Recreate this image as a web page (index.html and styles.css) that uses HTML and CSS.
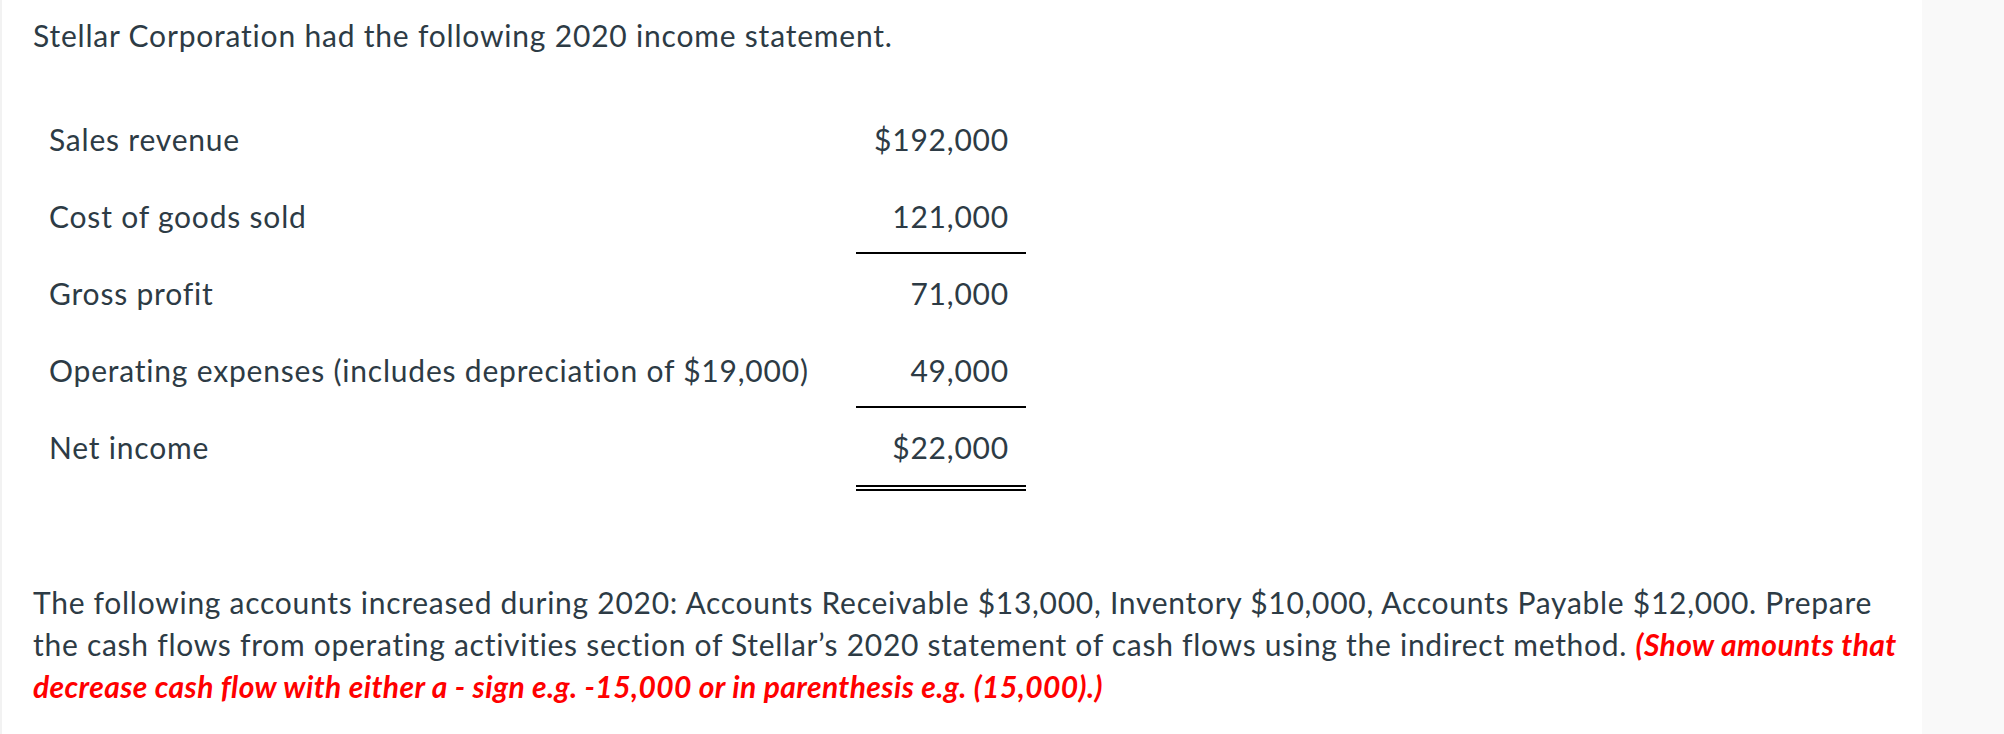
FILE: index.html
```html
<!DOCTYPE html>
<html lang="en">
<head>
<meta charset="utf-8">
<title>Stellar Corporation</title>
<link rel="stylesheet" href="styles.css">
</head>
<body>
<div class="page">
  <main class="content">
    <p class="intro">Stellar Corporation had the following 2020 income statement.</p>
    <table class="statement">
      <tbody>
        <tr>
          <td class="label">Sales revenue</td>
          <td class="amount">$192,000</td>
        </tr>
        <tr>
          <td class="label">Cost of goods sold</td>
          <td class="amount rule">121,000</td>
        </tr>
        <tr>
          <td class="label">Gross profit</td>
          <td class="amount">71,000</td>
        </tr>
        <tr>
          <td class="label">Operating expenses (includes depreciation of $19,000)</td>
          <td class="amount rule">49,000</td>
        </tr>
        <tr class="total">
          <td class="label">Net income</td>
          <td class="amount double">$22,000</td>
        </tr>
      </tbody>
    </table>
    <p class="task">The following accounts increased during 2020: Accounts Receivable $13,000, Inventory $10,000, Accounts Payable $12,000. Prepare the cash flows from operating activities section of Stellar’s 2020 statement of cash flows using the indirect method. <strong class="note"><em>(Show amounts that decrease cash flow with either a - sign e.g. -15,000 or in parenthesis e.g. (15,000).)</em></strong></p>
  </main>
  <aside class="side"></aside>
</div>
</body>
</html>
```

FILE: styles.css
```css
* {
  box-sizing: border-box;
}

html, body {
  margin: 0;
  padding: 0;
  background: #ffffff;
}

body {
  font-family: Lato, "Open Sans", "Liberation Sans", sans-serif;
  font-size: 30px;
  line-height: 42px;
  letter-spacing: 0.8px;
  color: #2d3b45;
}

.page {
  display: flex;
  width: 2004px;
  height: 734px;
  overflow: hidden;
}

.content {
  flex: 1;
  border-left: 2px solid #f2f2f2;
  padding: 14px 20px 0 31px;
}

.side {
  width: 82px;
  flex: none;
  background: #f9f9f9;
}

.intro {
  margin: 0;
}

.statement {
  margin: 44px 0 0 16px;
  border-collapse: collapse;
  border-spacing: 0;
}

.statement td {
  padding: 18px 0 15px 0;
  border-bottom: 2px solid transparent;
  vertical-align: top;
}

.label {
  width: 807px;
}

.amount {
  width: 170px;
  padding-right: 17px !important;
  text-align: right;
}

.amount.rule {
  border-bottom: 2px solid #000000;
}

.statement .total td {
  padding-bottom: 17px;
  border-bottom: 6px double transparent;
}

.statement .total td.double {
  border-bottom: 6px double #000000;
}

.task {
  margin: 90px 0 0 0;
  letter-spacing: 0.72px;
}

.note {
  color: #ff0000;
  font-weight: 700;
  letter-spacing: 0.4px;
}
```
